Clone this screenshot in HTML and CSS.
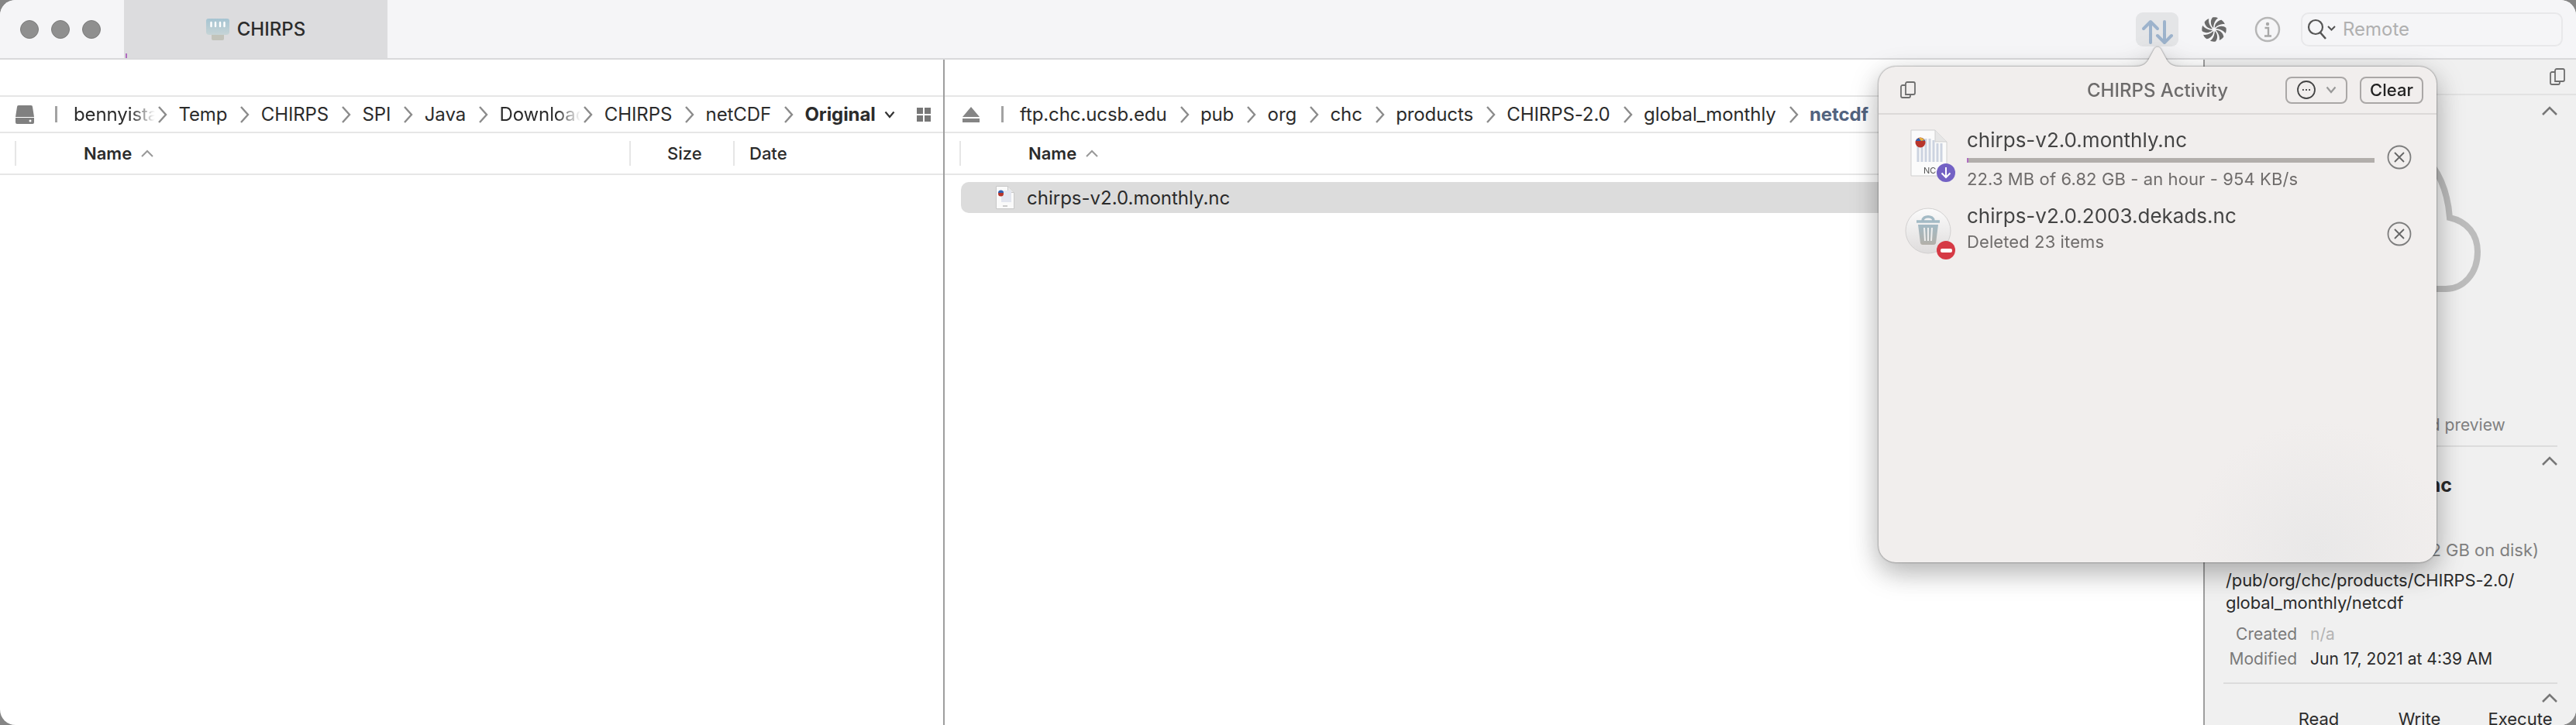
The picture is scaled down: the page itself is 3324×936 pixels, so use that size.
FILE: index.html
```html
<!DOCTYPE html>
<html lang="en">
<head>
  <meta charset="UTF-8">
  <title>CHIRPS</title>
  <link rel="stylesheet" href="styles.css">
</head>
<body>
<div class="window">

  <!-- toolbar -->
  <div class="toolbar">
    <div class="lights"><span></span><span></span><span></span></div>
    <div class="tab">
      <i class="tab-tick"></i>
      <svg class="tab-icon" width="30" height="28" viewBox="0 0 30 28">
        <defs><linearGradient id="plug" x1="0" y1="0" x2="0" y2="1"><stop offset="0" stop-color="#a6c4d2"/><stop offset="1" stop-color="#c6d4d6"/></linearGradient></defs>
        <rect x="7" y="18" width="16" height="10" rx="2" fill="#c2c3ba"/>
        <path d="M3 0h24a3 3 0 0 1 3 3v14a4 4 0 0 1-4 4H4a4 4 0 0 1-4-4V3a3 3 0 0 1 3-3Z" fill="url(#plug)"/>
        <path d="M6.500 5v5M12 5v5M18 5v5M23.500 5v5" stroke="#fff" stroke-width="2.400" stroke-linecap="round"/>
      </svg>
      <span>CHIRPS</span>
    </div>
    <div class="tools">
      <div class="tool tool-on">
        <svg width="54" height="44" viewBox="0 0 54 44">
          <path d="M18 39V13M9 21l9-9 9 9" fill="none" stroke="#9db3cc" stroke-width="4" stroke-linecap="round" stroke-linejoin="round"/>
          <path d="M36 12v26M27 30l9 9 9-9" fill="none" stroke="#9db3cc" stroke-width="4" stroke-linecap="round" stroke-linejoin="round"/>
        </svg>
      </div>
      <svg class="pinwheel" width="32" height="32" viewBox="-16 -16 32 32">
        <g fill="#6b6b6b">
          <path id="blade" d="M-1-2C-5-6-5-12-2-15.500C1-16 4-15.500 5-14.500C1-12-.5-7-1-2Z"/>
          <use href="#blade" transform="rotate(45)"/>
          <use href="#blade" transform="rotate(90)"/>
          <use href="#blade" transform="rotate(135)"/>
          <use href="#blade" transform="rotate(180)"/>
          <use href="#blade" transform="rotate(225)"/>
          <use href="#blade" transform="rotate(270)"/>
          <use href="#blade" transform="rotate(315)"/>
        </g>
      </svg>
      <svg class="info" width="34" height="34" viewBox="0 0 34 34">
        <circle cx="17" cy="17" r="15" fill="none" stroke="#b6b6b6" stroke-width="2.500"/>
        <circle cx="17" cy="10" r="2.200" fill="#a8a8a8"/>
        <path d="M13.500 15h4.500v10M13 25.500h9" fill="none" stroke="#a8a8a8" stroke-width="2.400"/>
      </svg>
      <div class="search">
        <svg width="38" height="30" viewBox="0 0 38 30">
          <circle cx="11" cy="12" r="9" fill="none" stroke="#555" stroke-width="2.200"/>
          <path d="M17 19l7 8" stroke="#555" stroke-width="2.500"/>
          <path d="M27 11l4.500 4.500 4.500-4.500" fill="none" stroke="#555" stroke-width="2"/>
        </svg>
        <span>Remote</span>
      </div>
    </div>
  </div>

  <div class="main">

    <!-- left browser -->
    <div class="pane pane-left">
      <div class="pane-top"></div>
      <div class="pathbar">
        <svg class="vol" width="24" height="24" viewBox="0 0 24 24"><path d="M4 0h16a2 2 0 0 1 2 2l2 13H0L2 2a2 2 0 0 1 2-2Z M0 16h24v6a2 2 0 0 1-2 2H2a2 2 0 0 1-2-2Z" fill="#808080"/><circle cx="19" cy="20" r="1.500" fill="#fff"/></svg>
        <i class="bar"></i>
        <span class="crumb fade">bennyistanto</span>
        <svg class="chev" viewBox="0 0 13 22"><path d="M2 1l9 10-9 10"/></svg>
        <span class="crumb">Temp</span>
        <svg class="chev" viewBox="0 0 13 22"><path d="M2 1l9 10-9 10"/></svg>
        <span class="crumb">CHIRPS</span>
        <svg class="chev" viewBox="0 0 13 22"><path d="M2 1l9 10-9 10"/></svg>
        <span class="crumb">SPI</span>
        <svg class="chev" viewBox="0 0 13 22"><path d="M2 1l9 10-9 10"/></svg>
        <span class="crumb">Java</span>
        <svg class="chev" viewBox="0 0 13 22"><path d="M2 1l9 10-9 10"/></svg>
        <span class="crumb fade">Downloads</span>
        <svg class="chev" viewBox="0 0 13 22"><path d="M2 1l9 10-9 10"/></svg>
        <span class="crumb">CHIRPS</span>
        <svg class="chev" viewBox="0 0 13 22"><path d="M2 1l9 10-9 10"/></svg>
        <span class="crumb">netCDF</span>
        <svg class="chev" viewBox="0 0 13 22"><path d="M2 1l9 10-9 10"/></svg>
        <span class="crumb current">Original</span>
        <svg class="down" width="14" height="10" viewBox="0 0 14 10"><path d="M1.500 1.500L7 8l5.500-6.500" fill="none" stroke="#333" stroke-width="2.200"/></svg>
        <svg class="grid" width="18" height="18" viewBox="0 0 18 18"><path d="M0 0h8v8H0zM10 0h8v8h-8zM0 10h8v8H0zM10 10h8v8h-8z" fill="#777"/></svg>
      </div>
      <div class="head">
        <div class="col col-name">
          <span>Name</span>
          <svg class="sort" width="16" height="10" viewBox="0 0 16 10"><path d="M1 9l7-7 7 7" fill="none" stroke="#999" stroke-width="2"/></svg>
        </div>
        <div class="col col-size">Size</div>
        <div class="col col-date">Date</div>
      </div>
    </div>

    <!-- right browser -->
    <div class="pane pane-right">
      <div class="pane-top"></div>
      <div class="pathbar">
        <svg class="vol" width="24" height="20" viewBox="0 0 24 20"><path d="M12 0l11 13H1Z M1 15h22v5H1Z" fill="#858585"/></svg>
        <i class="bar"></i>
        <span class="crumb">ftp.chc.ucsb.edu</span>
        <svg class="chev" viewBox="0 0 13 22"><path d="M2 1l9 10-9 10"/></svg>
        <span class="crumb">pub</span>
        <svg class="chev" viewBox="0 0 13 22"><path d="M2 1l9 10-9 10"/></svg>
        <span class="crumb">org</span>
        <svg class="chev" viewBox="0 0 13 22"><path d="M2 1l9 10-9 10"/></svg>
        <span class="crumb">chc</span>
        <svg class="chev" viewBox="0 0 13 22"><path d="M2 1l9 10-9 10"/></svg>
        <span class="crumb">products</span>
        <svg class="chev" viewBox="0 0 13 22"><path d="M2 1l9 10-9 10"/></svg>
        <span class="crumb">CHIRPS-2.0</span>
        <svg class="chev" viewBox="0 0 13 22"><path d="M2 1l9 10-9 10"/></svg>
        <span class="crumb">global_monthly</span>
        <svg class="chev" viewBox="0 0 13 22"><path d="M2 1l9 10-9 10"/></svg>
        <span class="crumb active">netcdf</span>
      </div>
      <div class="head">
        <div class="col col-name">
          <span>Name</span>
          <svg class="sort" width="16" height="10" viewBox="0 0 16 10"><path d="M1 9l7-7 7 7" fill="none" stroke="#999" stroke-width="2"/></svg>
        </div>
      </div>
      <div class="row">
        <svg class="row-icon" width="24" height="30" viewBox="0 0 24 30">
          <path d="M.5.500h15l8 8v21H.5Z" fill="#fafafa" stroke="#c8c8c8"/>
          <path d="M15.500.500v8h8" fill="#e8e8e8" stroke="#c8c8c8"/>
          <rect x="7" y="6" width="13" height="15" fill="#e3e6ef"/>
          <circle cx="6.500" cy="10" r="3.500" fill="#b5342a"/>
          <path d="M3 9a3.500 3.500 0 0 1 7 0Z" fill="#2f5fb0"/>
          <path d="M9 26h6" stroke="#bbb" stroke-width="1.500"/>
        </svg>
        <span>chirps-v2.0.monthly.nc</span>
      </div>
    </div>

    <!-- info panel -->
    <div class="inspector">
      <div class="ins-top">
        <svg class="copy" width="24" height="24" viewBox="0 0 24 24"><use href="#copy-shape"/></svg>
      </div>
      <div class="ins-preview">
        <svg class="caret" width="20" height="12" viewBox="0 0 20 12"><path d="M1 11l9-9 9 9" fill="none" stroke="#777" stroke-width="2.500"/></svg>
        <svg class="cloud" width="232" height="200" viewBox="0 0 232 200">
          <path d="M30 195C10 195 4 170 4 150C4 125 22 108 45 106C48 55 78 10 125 10C160 10 188 50 192 103C215 108 228 125 228 147C228 175 210 195 187 195Z" fill="none" stroke="#bcbcbc" stroke-width="8"/>
        </svg>
        <p class="preview-note">Click to show cached preview</p>
      </div>
      <div class="ins-general">
        <svg class="caret" width="20" height="12" viewBox="0 0 20 12"><path d="M1 11l9-9 9 9" fill="none" stroke="#777" stroke-width="2.500"/></svg>
        <h3>chirps-v2.0.monthly.nc</h3>
        <p class="size">7,325,000,000 bytes (7.32 GB on disk)</p>
        <p class="where">/pub/org/chc/products/CHIRPS-2.0/<br>global_monthly/netcdf</p>
        <div class="dates">
          <span class="k">Created</span><span class="na">n/a</span>
          <span class="k">Modified</span><span>Jun 17, 2021 at 4:39 AM</span>
        </div>
      </div>
      <div class="ins-perms">
        <svg class="caret" width="20" height="12" viewBox="0 0 20 12"><path d="M1 11l9-9 9 9" fill="none" stroke="#777" stroke-width="2.500"/></svg>
        <div class="perm-labels"><span>Read</span><span>Write</span><span>Execute</span></div>
      </div>
    </div>
  </div>

  <!-- activity popover -->
  <div class="popover">
    <svg class="pop-tip" width="60" height="28" viewBox="0 0 60 28">
      <path d="M0 26C12 26 16 22 20 14L26 3C28 0 32 0 34 3L40 14C44 22 48 26 60 26V28H0Z" fill="#f1eeed"/>
    </svg>
    <div class="pop-head">
      <svg class="pop-copy" width="24" height="28" viewBox="0 0 24 24">
        <defs><g id="copy-shape"><path d="M9 18V4a2 2 0 0 1 2-2h8a2 2 0 0 1 2 2v12a2 2 0 0 1-2 2Z M9 6H5a2 2 0 0 0-2 2v12a2 2 0 0 0 2 2h8a2 2 0 0 0 2-2v-2" fill="none" stroke="#6e6e6e" stroke-width="1.800"/></g></defs>
        <use href="#copy-shape"/>
      </svg>
      <div class="pop-title">CHIRPS Activity</div>
      <div class="btn btn-menu">
        <svg width="26" height="26" viewBox="0 0 26 26"><circle cx="13" cy="13" r="11" fill="none" stroke="#444" stroke-width="1.800"/><path d="M8 13h1.800M12.100 13h1.800M16.200 13h1.800" stroke="#444" stroke-width="2.200"/></svg>
        <svg width="14" height="10" viewBox="0 0 14 10"><path d="M1.500 1.500L7 8l5.500-6.500" fill="none" stroke="#999" stroke-width="2.200"/></svg>
      </div>
      <div class="btn btn-clear">Clear</div>
    </div>

    <div class="job job-first">
      <div class="job-icon">
        <svg width="48" height="62" viewBox="0 0 48 62">
          <path d="M1 1h31l15 15v44H1Z" fill="#fbfbfb" stroke="#cfcfcf"/>
          <path d="M32 1v15h15" fill="#e6e6e6" stroke="#cfcfcf"/>
          <path d="M10 12v30M15 12v30M20 12v30M25 12v30M30 14v28M35 18v24M40 18v24" stroke="#ccd3e0" stroke-width="3"/>
          <circle cx="13" cy="17" r="6.500" fill="#b8352b"/>
          <path d="M7 15a6.500 6.500 0 0 1 12 0Z" fill="#2f62b5"/>
          <path d="M11 11a6.500 6.500 0 0 1 7 3l-4 1Z" fill="#e9b23c"/>
          <text x="17" y="57" class="nc">NC</text>
        </svg>
        <span class="badge badge-dl">
          <svg width="14" height="16" viewBox="0 0 14 16"><path d="M7 1v13M1.500 8.500L7 14l5.500-5.500" fill="none" stroke="#fff" stroke-width="2"/></svg>
        </span>
      </div>
      <div class="job-body">
        <div class="job-name">chirps-v2.0.monthly.nc</div>
        <div class="progress"><i></i></div>
        <div class="job-detail">22.3 MB of 6.82 GB - an hour - 954 KB/s</div>
      </div>
      <svg class="stop" width="32" height="32" viewBox="0 0 32 32"><circle cx="16" cy="16" r="14.500" fill="none" stroke="#7d7d7d" stroke-width="1.800"/><path d="M10 10l12 12M22 10L10 22" stroke="#666" stroke-width="1.800"/></svg>
    </div>

    <div class="job job-second">
      <div class="job-icon">
        <svg class="trash" width="60" height="60" viewBox="0 0 60 60">
          <defs>
            <linearGradient id="disc" x1="0" y1="0" x2="0" y2="1"><stop offset="0" stop-color="#fbfbfb"/><stop offset="1" stop-color="#dedcdc"/></linearGradient>
            <linearGradient id="can" x1="0" y1="0" x2="0" y2="1"><stop offset="0" stop-color="#a3bac5"/><stop offset="1" stop-color="#b3b0a9"/></linearGradient>
          </defs>
          <circle cx="30" cy="30" r="29" fill="url(#disc)" stroke="#d2d0d0"/>
          <path d="M15 18h30M23 17c0-7 14-7 14 0" fill="none" stroke="#a3bac5" stroke-width="3.500"/>
          <path d="M17 22h26l-3 24a3 3 0 0 1-3 2H23a3 3 0 0 1-3-2Z" fill="url(#can)"/>
          <path d="M25 26l1 17M30 26v17M35 26l-1 17" stroke="#eeeeee" stroke-width="2"/>
        </svg>
        <span class="badge badge-del"><i></i></span>
      </div>
      <div class="job-body">
        <div class="job-name">chirps-v2.0.2003.dekads.nc</div>
        <div class="job-detail job-detail-del">Deleted 23 items</div>
      </div>
      <svg class="stop" width="32" height="32" viewBox="0 0 32 32"><circle cx="16" cy="16" r="14.500" fill="none" stroke="#7d7d7d" stroke-width="1.800"/><path d="M10 10l12 12M22 10L10 22" stroke="#666" stroke-width="1.800"/></svg>
    </div>
  </div>

</div>
</body>
</html>
```

FILE: styles.css
```css
* {
  box-sizing: border-box;
}
html, body {
  margin: 0;
  height: 100%;
  background: #858585;
  overflow: hidden;
}
body {
  font-family: Inter, "Liberation Sans", sans-serif;
  color: #2b2b2b;
}
p, h3 {
  margin: 0;
}
svg {
  flex: none;
}

.window {
  position: relative;
  width: 3324px;
  height: 936px;
  border-radius: 20px;
  overflow: hidden;
  background: #fff;
}

/* toolbar */
.toolbar {
  display: flex;
  align-items: stretch;
  height: 77px;
  background: #f5f5f7;
  border-bottom: 2px solid #d9d9db;
}
.lights {
  display: flex;
  align-items: center;
  gap: 16px;
  width: 160px;
  padding-left: 26px;
}
.lights span {
  width: 24px;
  height: 24px;
  border-radius: 50%;
  background: #8f8f8f;
  border: 1px solid #7b7b7b;
}
.tab {
  position: relative;
  display: flex;
  align-items: center;
  justify-content: center;
  gap: 10px;
  width: 340px;
  background: #dcdcde;
  font-size: 24px;
  font-weight: 500;
  color: #2c2c2c;
}
.tab-tick {
  position: absolute;
  left: 2px;
  bottom: 0;
  width: 2px;
  height: 6px;
  background: #b06cc0;
}
.tools {
  display: flex;
  align-items: center;
  margin-left: auto;
  padding-right: 17px;
}
.tool {
  display: flex;
  align-items: center;
  justify-content: center;
  width: 55px;
  height: 44px;
  border-radius: 9px;
}
.tool-on {
  background: #e4e5e7;
}
.pinwheel {
  margin-left: 30px;
}
.info {
  margin-left: 36px;
}
.search {
  display: flex;
  align-items: center;
  gap: 8px;
  width: 338px;
  height: 44px;
  margin-left: 26px;
  padding-left: 6px;
  border: 2px solid #e8e8ea;
  border-radius: 10px;
  font-size: 24px;
  color: #b0b0b0;
}

/* browser panes */
.main {
  display: flex;
  height: 859px;
}
.pane {
  flex: none;
  overflow: hidden;
}
.pane-left {
  width: 1219px;
  border-right: 2px solid #9e9e9e;
}
.pane-right {
  width: 1624px;
}
.pane-top {
  height: 46px;
}
.pathbar {
  display: flex;
  align-items: center;
  height: 49px;
  border-top: 2px solid #e6e6e6;
  border-bottom: 2px solid #e6e6e6;
  padding-left: 20px;
  font-size: 24px;
  letter-spacing: -.1px;
  white-space: nowrap;
}
.pane-right .pathbar {
  padding-left: 22px;
}
.bar {
  flex: none;
  width: 3px;
  height: 21px;
  margin: 0 21px 0 27px;
  background: #a2a2a2;
}
.crumb {
  flex: none;
}
.current {
  font-weight: 700;
}
.active {
  font-weight: 700;
  color: #52637f;
}
/* squeezed crumbs fade out and run up to their chevron */
.fade {
  width: 105px;
  margin-right: -13px;
  overflow: hidden;
  -webkit-mask-image: linear-gradient(to right, #000 70%, transparent);
  mask-image: linear-gradient(to right, #000 70%, transparent);
}
.chev {
  width: 13px;
  height: 22px;
  margin: 0 14.400px 0 16px;
}
.chev path {
  fill: none;
  stroke: #8b8b8b;
  stroke-width: 2.400;
}
.down {
  margin-left: 11px;
}
.grid {
  margin-left: 28px;
}

.head {
  display: flex;
  align-items: center;
  height: 54px;
  border-bottom: 2px solid #e6e6e6;
  font-size: 22px;
}
.col {
  display: flex;
  align-items: center;
  height: 32px;
  border-left: 2px solid #e6e6e6;
}
.col-name {
  gap: 12px;
  width: 793px;
  margin-left: 19px;
  padding-left: 87px;
  font-weight: 600;
}
.col-size {
  width: 134px;
  padding-left: 47px;
  font-weight: 500;
}
.col-date {
  padding-left: 19px;
  font-weight: 500;
}
.row {
  display: flex;
  align-items: center;
  gap: 16px;
  height: 40px;
  margin: 9px 0 0 21px;
  padding-left: 45px;
  border-radius: 10px;
  background: #dcdcdc;
  font-size: 24px;
}

/* info panel */
.inspector {
  flex: 1;
  min-width: 0;
  background: #f0f0f0;
  border-left: 2px solid #9e9e9e;
}
.ins-top {
  display: flex;
  justify-content: flex-end;
  align-items: center;
  height: 46px;
  padding-right: 12px;
  border-bottom: 2px solid #e2e2e2;
}
.caret {
  display: block;
  margin-left: auto;
}
.ins-preview {
  height: 454px;
  margin: 0 24px;
  padding-top: 14px;
  border-bottom: 2px solid #dcdcdc;
}
.cloud {
  display: block;
  margin: 29px auto 0;
}
.preview-note {
  margin-top: 158px;
  text-align: center;
  font-size: 21px;
  color: #808080;
}
.ins-general {
  height: 306px;
  margin: 0 24px;
  padding-top: 12px;
  border-bottom: 2px solid #dcdcdc;
  font-size: 22px;
}
.ins-general h3 {
  margin: 10px 0 0 5px;
  font-size: 25px;
  font-weight: 700;
}
.size {
  margin-top: 56px;
  padding-right: 24px;
  text-align: right;
  color: #808080;
  font-size: 22px;
}
.where {
  margin: 12px 0 0 3px;
  line-height: 29px;
  letter-spacing: -.1px;
}
.dates {
  display: grid;
  grid-template-columns: 90px auto;
  justify-content: start;
  column-gap: 17px;
  row-gap: 8px;
  margin: 14px 0 0 5px;
  line-height: 24px;
  font-size: 21px;
}
.k {
  text-align: right;
  color: #7a7a7a;
}
.na {
  color: #b4b4b4;
}
.ins-perms {
  margin: 0 24px;
  padding-top: 12px;
  font-size: 22px;
}
.perm-labels {
  display: grid;
  grid-template-columns: repeat(3, 130px);
  width: 390px;
  margin: 8px 0 0 58px;
  text-align: center;
}

/* popover */
.popover {
  position: absolute;
  left: 2424px;
  top: 86px;
  width: 720px;
  height: 640px;
  border-radius: 22px;
  background: radial-gradient(circle at 566px 623px, #e9e8e8 0, rgba(233, 232, 232, 0) 165px), #f1eeed;
  filter: drop-shadow(0 12px 18px rgba(0, 0, 0, .22)) drop-shadow(0 0 1px rgba(0, 0, 0, .55));
}
.pop-tip {
  position: absolute;
  left: 330px;
  top: -26px;
}
.pop-head {
  position: relative;
  display: flex;
  align-items: center;
  height: 62px;
  padding: 0 17px 0 26px;
  border-bottom: 2px solid #dcd9d8;
}
.pop-title {
  position: absolute;
  left: 0;
  right: 0;
  text-align: center;
  font-size: 24px;
  font-weight: 500;
  color: #6d6b6b;
}
.btn {
  position: relative;
  display: flex;
  align-items: center;
  justify-content: center;
  height: 35px;
  border: 2px solid #aaa7a6;
  border-radius: 8px;
}
.btn-menu {
  gap: 12px;
  width: 80px;
  margin-left: auto;
}
.btn-clear {
  width: 82px;
  margin-left: 16px;
  font-size: 22px;
  font-weight: 500;
  color: #222;
}
.job {
  display: flex;
}
.job-first {
  height: 117px;
  padding-top: 19px;
  padding-left: 41px;
}
.job-second {
  height: 90px;
  padding-left: 34px;
}
.job-icon {
  position: relative;
  flex: none;
  width: 73px;
}
.job-second .job-icon {
  width: 80px;
}
.trash {
  margin-top: 3px;
}
.badge {
  position: absolute;
  display: flex;
  align-items: center;
  justify-content: center;
  width: 24px;
  height: 24px;
  border-radius: 50%;
}
.badge-dl {
  left: 34px;
  top: 44px;
  background: #7361c4;
}
.badge-del {
  left: 41px;
  top: 46px;
  background: #d63a45;
}
.badge-del i {
  width: 15px;
  height: 5px;
  border-radius: 2px;
  background: #fff;
}
.job-body {
  flex: none;
  width: 526px;
}
.job-name {
  height: 28px;
  line-height: 28px;
  font-size: 26px;
  color: #444;
}
.progress {
  height: 6px;
  margin-top: 9px;
  background: #b2aeab;
}
.progress i {
  display: block;
  width: 2px;
  height: 6px;
  background: #b06cc0;
}
.job-detail {
  margin-top: 8px;
  font-size: 22px;
  letter-spacing: .1px;
  color: #6f6c6b;
}
.job-detail-del {
  margin-top: 6px;
}
.stop {
  margin: 20px 0 0 16px;
}
.job-second .stop {
  margin-top: 21px;
}
.nc {
  font-size: 11px;
  fill: #555;
}
```
